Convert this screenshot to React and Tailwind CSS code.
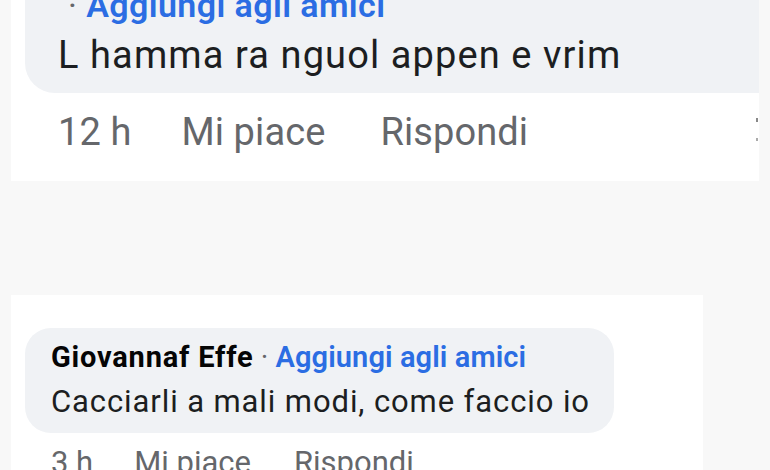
import React from "react";

const font = { fontFamily: "Roboto, 'Liberation Sans', sans-serif" };

function Actions({ time, big }) {
  return (
    <div
      className={
        big
          ? "flex items-start text-[38px] leading-[44px] text-[#65676b] tracking-[0.1px]"
          : "flex items-start text-[31px] leading-[36px] text-[#65676b]"
      }
    >
      <span>{time}</span>
      <span className={big ? "ml-[50px]" : "ml-[41px]"}>Mi piace</span>
      <span className={big ? "ml-[55px]" : "ml-[43px]"}>Rispondi</span>
    </div>
  );
}

export default function App() {
  return (
    <div className="w-[770px] h-[470px] overflow-hidden bg-[#f8f8f8] flex flex-col" style={font}>
      {/* first comment, scrolled half off the top */}
      <div className="ml-[11px] w-[748px] h-[181px] shrink-0 bg-white flex flex-col">
        <div className="ml-[14px] h-[93px] bg-[#f0f2f5] rounded-bl-[30px] flex flex-col justify-end pl-[33px] pb-[17px] overflow-hidden">
          <div className="text-[34px] leading-[40px] font-semibold text-[#2b6de3] pl-[10px] mb-[9px] whitespace-nowrap tracking-[0.4px]">
            <span className="text-[#65676b] font-normal">·</span> Aggiungi agli amici
          </div>
          <div className="text-[38px] leading-[42px] text-[#1c1e21] whitespace-nowrap tracking-[1.1px]">
            L hamma ra nguol appen e vrim
          </div>
        </div>
        <div className="flex items-start justify-between pl-[47px] pt-[17px]">
          <Actions time="12 h" big />
          <div className="flex flex-col gap-[16px] pt-[8px] mr-[1px]">
            <span className="w-[2px] h-[4px] bg-[#888]" />
            <span className="w-[2px] h-[3px] bg-[#aaa]" />
          </div>
        </div>
      </div>

      {/* second comment */}
      <div className="mt-[114px] ml-[11px] w-[692px] flex-1 bg-white pl-[14px] pt-[33px]">
        <div className="inline-flex flex-col bg-[#f0f2f5] rounded-[26px] pl-[26px] pr-[24px] pt-[11px] pb-[12px]">
          <div className="text-[29px] leading-[36px] whitespace-nowrap">
            <span className="font-bold text-[#050505] tracking-[0.8px]">Giovannaf Effe</span>
            <span className="text-[#65676b]"> · </span>
            <span className="font-semibold text-[#2b6de3] tracking-[0.1px]">Aggiungi agli amici</span>
          </div>
          <div className="mt-[8px] text-[31px] leading-[38px] text-[#1c1e21] whitespace-nowrap tracking-[0.9px]">
            Cacciarli a mali modi, come faccio io
          </div>
        </div>
        <div className="pl-[26px] pt-[12px]">
          <Actions time="3 h" />
        </div>
      </div>
    </div>
  );
}
